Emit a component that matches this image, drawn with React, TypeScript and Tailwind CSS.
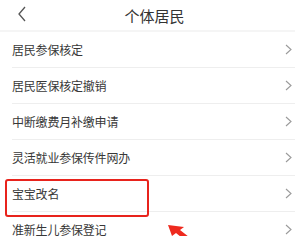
const items = [
  "居民参保核定",
  "居民医保核定撤销",
  "中断缴费月补缴申请",
  "灵活就业参保传件网办",
  "宝宝改名",
  "准新生儿参保登记",
];

function Chevron() {
  return (
    <svg width="7" height="11" viewBox="0 0 7 11" className="shrink-0">
      <path d="M1 1 L6 5.5 L1 10" fill="none" stroke="#9a9a9a" strokeWidth="1.1" />
    </svg>
  );
}

export default function App() {
  return (
    <div
      className="w-[295px] h-[236px] overflow-hidden bg-white relative"
      style={{ fontFamily: '"Noto Sans CJK SC", "Noto Sans", sans-serif' }}
    >
      <div className="h-[30px] flex items-center justify-center relative">
        <svg width="10" height="16" viewBox="0 0 10 16" className="absolute left-[17px] top-[6px]">
          <path d="M8 1 L2 8 L8 15" fill="none" stroke="#555" strokeWidth="1.3" />
        </svg>
        <span className="text-[15px] text-[#333] ml-[14px] leading-none">个体居民</span>
      </div>
      <div className="h-[2px] bg-[#f5f5f5]" />
      {items.map((t, i) => (
        <div key={t} className="relative">
          <div className="ml-[12px] h-[36px] border-b border-[#eeeeee] flex items-center justify-between pr-[3px]">
            <span className="text-[12px] text-[#383838] tracking-[-0.2px]">{t}</span>
            <Chevron />
          </div>
          {i === 4 && (
            <div className="absolute left-[5px] top-[3px] w-[144px] h-[38px] border-2 border-[#e8231c] rounded-[3px]" />
          )}
        </div>
      ))}
      <svg width="30" height="14" viewBox="0 0 30 14" className="absolute left-[167px] top-[223px]">
        <path d="M1 2 L17 4 L13 7 L22 14 L14 14 L9 10 L5 13 Z" fill="#ee2a1e" />
      </svg>
    </div>
  );
}
